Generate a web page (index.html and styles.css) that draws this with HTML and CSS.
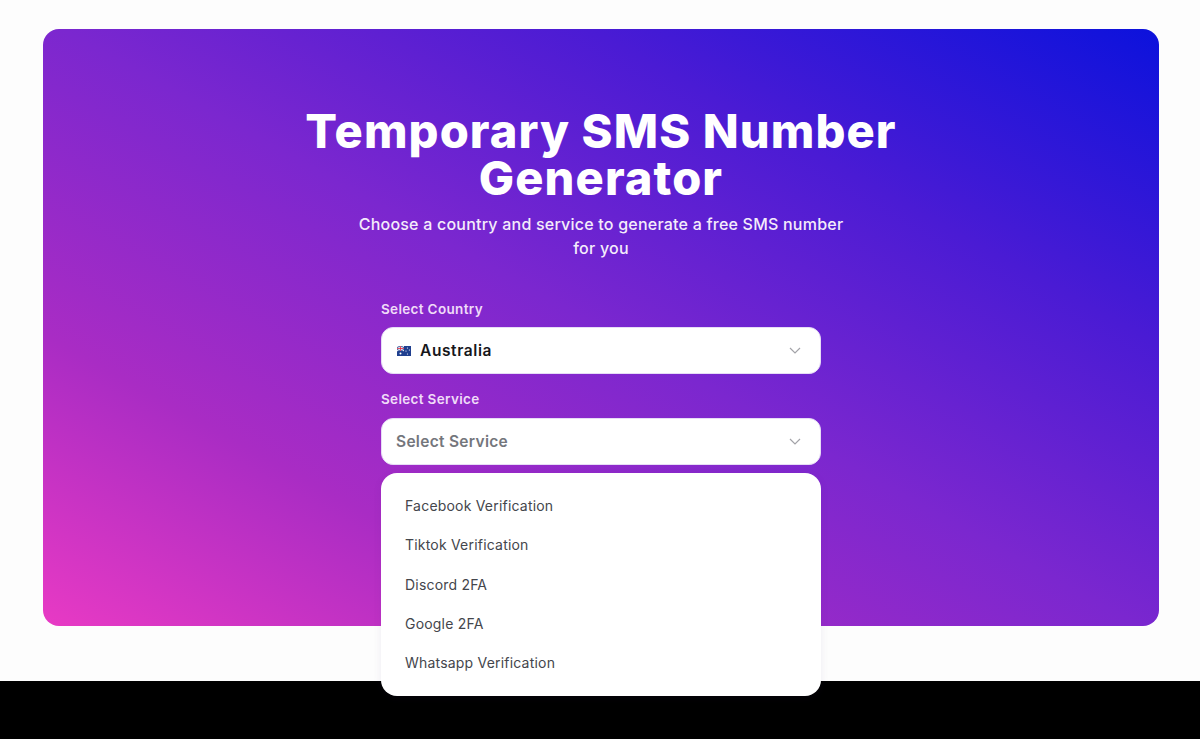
FILE: index.html
```html
<!DOCTYPE html>
<html lang="en">
<head>
<meta charset="utf-8">
<title>Temporary SMS Number Generator</title>
<link rel="stylesheet" href="styles.css">
</head>
<body>
<main class="page">
  <section class="hero">
    <h1 class="title">Temporary SMS Number Generator</h1>
    <p class="subtitle">Choose a country and service to generate a free SMS number for you</p>
    <form class="form">
      <div class="field">
        <span class="label">Select Country</span>
        <div class="select">
          <svg class="flag" viewBox="0 0 14 10" aria-hidden="true">
            <rect width="14" height="10" fill="#1f3f8f"/>
            <path d="M0 0L7 5M7 0L0 5" stroke="#fff" stroke-width="1"/>
            <path d="M3.5 0V5M0 2.5H7" stroke="#fff" stroke-width="1.6"/>
            <path d="M3.5 0V5M0 2.5H7" stroke="#d8263c" stroke-width=".8"/>
            <circle cx="3.5" cy="7.5" r="1" fill="#fff"/>
            <circle cx="10.5" cy="2" r=".6" fill="#fff"/>
            <circle cx="12.4" cy="4" r=".6" fill="#fff"/>
            <circle cx="9" cy="5" r=".6" fill="#fff"/>
            <circle cx="10.5" cy="8" r=".6" fill="#fff"/>
          </svg>
          <span class="value">Australia</span>
          <svg class="chev" viewBox="0 0 12 7" aria-hidden="true"><path d="M1 1l5 5 5-5"/></svg>
        </div>
      </div>
      <div class="field">
        <span class="label label-service">Select Service</span>
        <div class="select">
          <span class="placeholder">Select Service</span>
          <svg class="chev" viewBox="0 0 12 7" aria-hidden="true"><path d="M1 1l5 5 5-5"/></svg>
        </div>
        <ul class="menu">
          <li>Facebook Verification</li>
          <li>Tiktok Verification</li>
          <li>Discord 2FA</li>
          <li>Google 2FA</li>
          <li>Whatsapp Verification</li>
        </ul>
      </div>
    </form>
  </section>
</main>
<footer class="footer"></footer>
</body>
</html>
```

FILE: styles.css
```css
* { box-sizing: border-box; }
html, body { margin: 0; padding: 0; }
body {
  width: 1200px;
  height: 739px;
  overflow: hidden;
  background: #000;
  font-family: "Inter", "Noto Sans", sans-serif;
}
.page {
  height: 681px;
  padding: 29px 41px 0 43px;
  background: #fdfdfd;
}
.hero {
  height: 597px;
  padding-top: 78px;
  border-radius: 16px;
  background: linear-gradient(29deg, #e83ac4 0%, #a92cc4 24%, #7b27cf 50%, #4a1bd4 74%, #0c12dc 100%);
  display: flex;
  flex-direction: column;
  align-items: center;
}
.title {
  width: 620px;
  margin: 0;
  font-size: 47px;
  line-height: 47px;
  font-weight: 800;
  letter-spacing: 1.1px;
  text-align: center;
  color: #fff;
}
.subtitle {
  width: 500px;
  margin: 11px 0 0;
  font-size: 16px;
  line-height: 24px;
  font-weight: 500;
  letter-spacing: .22px;
  text-align: center;
  color: #f4ecfb;
}
.form {
  width: 440px;
  margin-top: 39px;
  display: flex;
  flex-direction: column;
  gap: 15px;
}
.field { position: relative; }
.label {
  display: block;
  height: 21px;
  margin-bottom: 7px;
  font-size: 13.5px;
  line-height: 21px;
  font-weight: 600;
  letter-spacing: .33px;
  color: #f0dcf8;
}
.label-service { margin-bottom: 8px; }
.select {
  height: 47px;
  padding: 0 19px 0 14px;
  display: flex;
  align-items: center;
  background: #fff;
  border: 1px solid #e6dcf6;
  border-radius: 12px;
}
.flag {
  width: 14px;
  height: 10px;
  margin: 0 9px 0 1px;
  flex: none;
}
.value {
  font-size: 15.5px;
  font-weight: 600;
  letter-spacing: .6px;
  color: #16161a;
}
.placeholder {
  font-size: 15.5px;
  font-weight: 600;
  letter-spacing: .3px;
  color: #74767c;
}
.chev {
  width: 12px;
  height: 7px;
  margin-left: auto;
  fill: none;
  stroke: #a3a3a8;
  stroke-width: 1.2;
}
.menu {
  position: absolute;
  top: 84px;
  left: 0;
  width: 440px;
  height: 223px;
  margin: 0;
  padding: 13px 24px;
  list-style: none;
  background: #fff;
  border-radius: 16px;
  box-shadow: 0 2px 8px rgba(60, 40, 110, .08);
}
.menu li {
  height: 39.25px;
  font-size: 14px;
  line-height: 39px;
  letter-spacing: .2px;
  color: #44464c;
}
.footer { height: 58px; background: #000; }
```
